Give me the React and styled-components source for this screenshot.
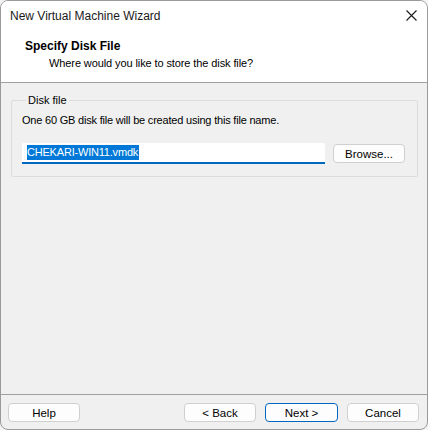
import React from 'react';
import styled, { createGlobalStyle } from 'styled-components';

const Global = createGlobalStyle`
  html, body {
    margin: 0;
    padding: 0;
    background: #f3f3f3;
  }
  body {
    font-family: "Liberation Sans", Arial, sans-serif;
    font-size: 11px;
    color: #000;
  }
`;

const Window = styled.div`
  width: 428px;
  height: 430px;
  box-sizing: border-box;
  border: 1px solid #9a9a9a;
  border-radius: 8px;
  overflow: hidden;
  display: flex;
  flex-direction: column;
  background: #f0f0f0;
`;

const TitleBar = styled.div`
  height: 29px;
  display: flex;
  align-items: center;
  justify-content: space-between;
  padding: 0 10px 0 9px;
  background: #fff;
`;

const Title = styled.span`
  font-size: 12px;
  color: #1a1a1a;
`;

const Header = styled.div`
  height: 53px;
  background: #fff;
  border-bottom: 1px solid #a0a0a0;
  box-sizing: border-box;
  padding: 8px 0 0 24px;
  display: flex;
  flex-direction: column;
`;

const Heading = styled.div`
  font-weight: 700;
  font-size: 12px;
  line-height: 16px;
`;

const SubHeading = styled.div`
  padding-left: 24px;
  margin-top: 1px;
  font-size: 11px;
  line-height: 17px;
  letter-spacing: -0.1px;
`;

const Body = styled.div`
  flex: 1;
  padding: 10px 9px 0 10px;
`;

const Group = styled.fieldset`
  margin: 0;
  padding: 5px 10px 0 10px;
  border: 1px solid #dcdcdc;
  border-radius: 2px;
  height: 84px;
  box-sizing: border-box;
`;

const Legend = styled.legend`
  padding: 0 2px;
  margin-left: 4px;
  font-size: 11px;
  line-height: 14px;
`;

const Hint = styled.div`
  font-size: 11px;
  line-height: 16px;
  letter-spacing: -0.2px;
`;

const FileRow = styled.div`
  display: flex;
  align-items: center;
  gap: 8px;
  margin-top: 15px;
`;

const Input = styled.div`
  width: 303px;
  height: 21px;
  box-sizing: border-box;
  background: #fff;
  border-bottom: 2px solid #0067c0;
  border-radius: 2px 2px 0 0;
  display: flex;
  align-items: center;
  padding-left: 5px;
`;

const Selected = styled.span`
  background: #0078d7;
  color: #fff;
  font-size: 11px;
  line-height: 15px;
  letter-spacing: -0.2px;
  padding-right: 1px;
`;

const Button = styled.button`
  width: ${p => p.$w || 72}px;
  height: 19px;
  box-sizing: border-box;
  background: #fdfdfd;
  border: 1px solid ${p => (p.$primary ? '#0067c0' : '#d0d0d0')};
  border-radius: 4px;
  font-family: "Liberation Sans", Arial, sans-serif;
  font-size: 11.5px;
  color: #000;
  padding: 0;
  display: flex;
  align-items: center;
  justify-content: center;
`;

const Footer = styled.div`
  height: 35px;
  border-top: 1px solid #a0a0a0;
  box-sizing: border-box;
  display: flex;
  align-items: center;
  padding: 1px 8px 0 7px;
  gap: 9px;
`;

const Spacer = styled.div`
  flex: 1;
`;

const Close = () => (
  <svg width="11" height="11" viewBox="0 0 11 11">
    <path d="M0.5 0.5 L10.5 10.5 M10.5 0.5 L0.5 10.5" stroke="#1a1a1a" strokeWidth="1.1" />
  </svg>
);

export default function App() {
  return (
    <>
      <Global />
      <Window>
        <TitleBar>
          <Title>New Virtual Machine Wizard</Title>
          <Close />
        </TitleBar>
        <Header>
          <Heading>Specify Disk File</Heading>
          <SubHeading>Where would you like to store the disk file?</SubHeading>
        </Header>
        <Body>
          <Group>
            <Legend>Disk file</Legend>
            <Hint>One 60 GB disk file will be created using this file name.</Hint>
            <FileRow>
              <Input>
                <Selected>CHEKARI-WIN11.vmdk</Selected>
              </Input>
              <Button $w={72}>Browse...</Button>
            </FileRow>
          </Group>
        </Body>
        <Footer>
          <Button $w={72}>Help</Button>
          <Spacer />
          <Button $w={72}>&lt; Back</Button>
          <Button $w={73} $primary>Next &gt;</Button>
          <Button $w={72}>Cancel</Button>
        </Footer>
      </Window>
    </>
  );
}
